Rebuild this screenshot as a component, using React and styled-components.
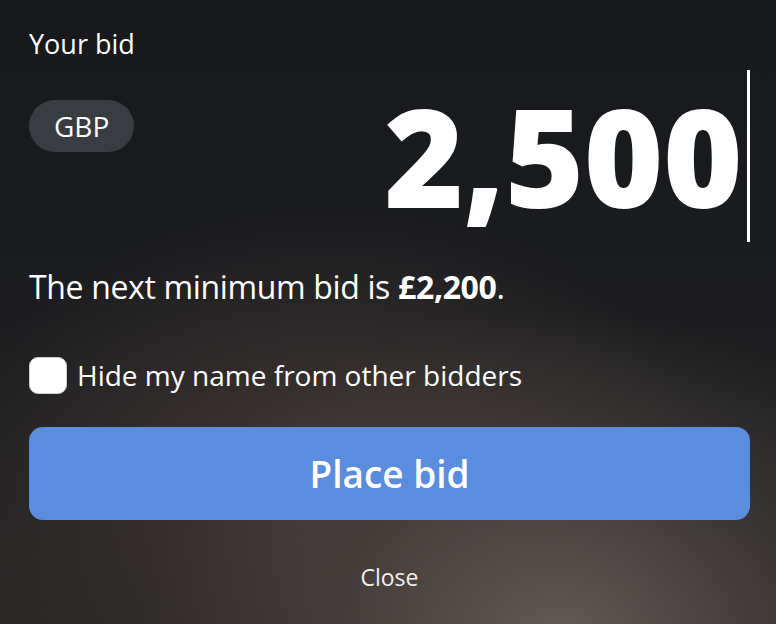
import React, { useState } from "react";
import styled, { createGlobalStyle } from "styled-components";

const GlobalStyle = createGlobalStyle`
  html, body {
    margin: 0;
    padding: 0;
    background: #16181b;
  }
  body {
    font-family: "Open Sans", "Noto Sans", sans-serif;
    color: #fff;
  }
`;

const Sheet = styled.div`
  width: 776px;
  height: 624px;
  box-sizing: border-box;
  padding: 26px 26px 0 29px;
  display: flex;
  flex-direction: column;
  overflow: hidden;
  background:
    radial-gradient(ellipse 420px 330px at 560px 640px, rgba(100, 94, 90, 0.95), rgba(80, 72, 68, 0.5) 55%, rgba(60, 52, 50, 0) 100%),
    radial-gradient(ellipse 380px 260px at 330px 470px, rgba(72, 60, 56, 0.8), rgba(50, 44, 42, 0) 100%),
    linear-gradient(180deg, #17191c 0%, #1b1c1f 45%, #2a2726 100%);
`;

const Label = styled.div`
  font-size: 27px;
  line-height: 36px;
`;

const AmountRow = styled.div`
  display: flex;
  justify-content: space-between;
  align-items: flex-start;
  margin-top: 8px;
  height: 176px;
`;

const Currency = styled.button`
  margin-top: 30px;
  height: 52px;
  padding: 0 25px;
  border: none;
  border-radius: 26px;
  background: #393c40;
  color: #fff;
  font-family: inherit;
  font-size: 28px;
  font-weight: 500;
`;

const Amount = styled.div`
  display: flex;
  align-items: center;
  height: 172px;
  font-size: 136px;
  font-weight: 800;
  letter-spacing: -0.6px;
  line-height: 1;
`;

const Caret = styled.span`
  width: 3px;
  height: 172px;
  background: #fff;
  margin-left: 5px;
`;

const Hint = styled.p`
  margin: 19px 0 0;
  font-size: 32px;
  letter-spacing: -0.35px;
  line-height: 44px;

  strong {
    font-weight: 700;
  }
`;

const CheckRow = styled.label`
  display: flex;
  align-items: center;
  gap: 10px;
  margin-top: 47px;
  font-size: 28px;
  line-height: 38px;
`;

const Box = styled.span`
  width: 38px;
  height: 37px;
  box-sizing: border-box;
  border-radius: 9px;
  background: ${(p) => (p.checked ? "#5b8dde" : "#fff")};
  border: 1px solid #cfcfcf;
`;

const PlaceButton = styled.button`
  margin-top: 33px;
  width: 721px;
  height: 93px;
  border: none;
  border-radius: 14px;
  background: #5b8dde;
  color: #fff;
  font-family: inherit;
  font-size: 37px;
  font-weight: 600;
`;

const CloseLink = styled.button`
  align-self: center;
  margin: 40px 0 0 0;
  border: none;
  background: none;
  color: #f0efee;
  font-family: inherit;
  font-size: 23px;
`;

export default function App() {
  const [hidden, setHidden] = useState(false);
  return (
    <>
      <GlobalStyle />
      <Sheet>
        <Label>Your bid</Label>
        <AmountRow>
          <Currency>GBP</Currency>
          <Amount>
            2,500
            <Caret />
          </Amount>
        </AmountRow>
        <Hint>
          The next minimum bid is <strong>£2,200</strong>.
        </Hint>
        <CheckRow onClick={() => setHidden(!hidden)}>
          <Box checked={hidden} />
          Hide my name from other bidders
        </CheckRow>
        <PlaceButton>Place bid</PlaceButton>
        <CloseLink>Close</CloseLink>
      </Sheet>
    </>
  );
}
